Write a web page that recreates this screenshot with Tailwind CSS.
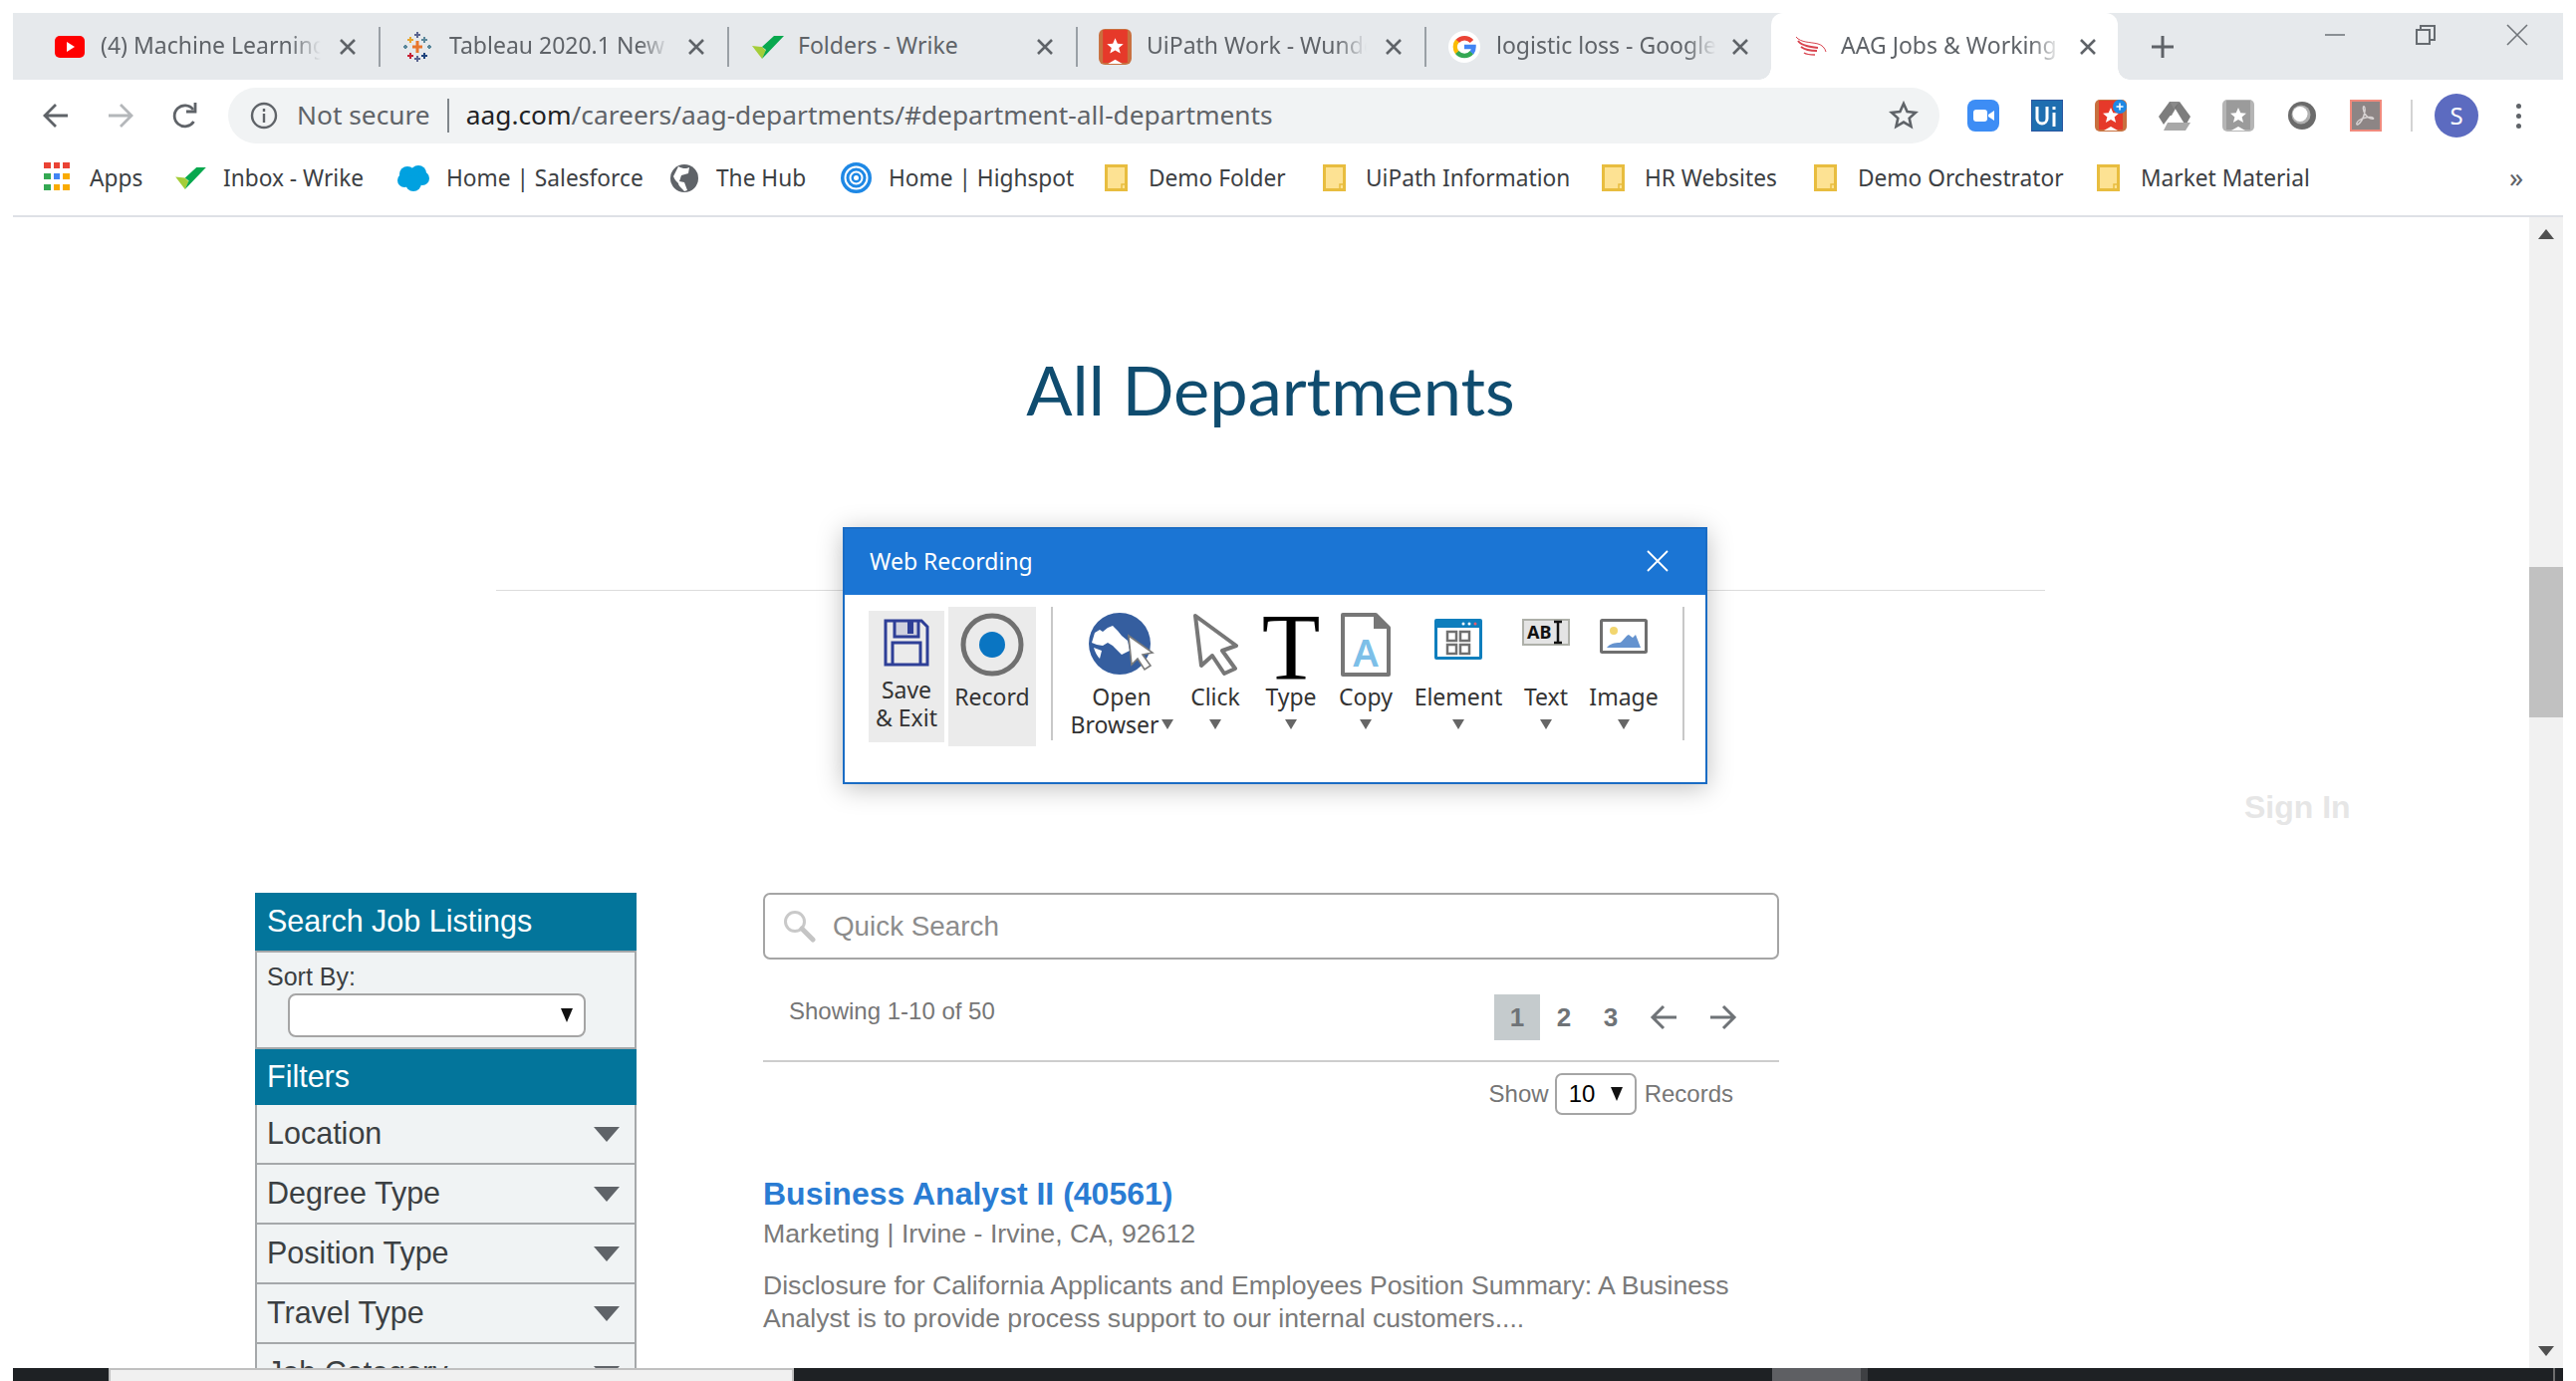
<!DOCTYPE html>
<html lang="en">
<head>
    <meta charset="UTF-8">
    <title>AAG Jobs &amp; Working at AAG</title>
    <script src="https://cdn.jsdelivr.net/npm/@tailwindcss/browser@4"></script>
</head>
<body class="bg-white overflow-hidden">
<svg class="hidden">
    <symbol id="folder" viewBox="0 0 23 27"><path d="M1.5 1.5h20v24H1.5z" fill="#fde293" stroke="#e8bd3f" stroke-width="3"/><path d="M17 25v-5h5" fill="none" stroke="#e8bd3f" stroke-width="1.5"/></symbol>
    <symbol id="check" viewBox="0 0 32 24"><path d="M0 11l10 1 4 4-4 8z" fill="#a4cd39"/><path d="M10 12L22 1h10L10 24l4-9z" fill="#08a84e"/></symbol>
    <symbol id="close" viewBox="0 0 18 18"><path d="M2 2l14 14M16 2L2 16" fill="none" stroke="#5f6368" stroke-width="2.6"/></symbol>
    <symbol id="caret" viewBox="0 0 12 10"><path d="M0 0h12L6 10z" fill="#666"/></symbol>
</svg>

<div class="w-[2586px] h-[1386px] flex flex-col pt-[13px] px-[13px] font-['Noto_Sans',sans-serif] overflow-hidden">

    <!-- tab strip -->
    <div class="h-[67px] shrink-0 bg-[#e6e9ec] flex items-center pl-[19px] text-[23px] text-[#5f6368]">
        <div class="w-[348px] h-full flex items-center pl-[23px]">
            <div class="w-[46px] shrink-0"><svg width="30" height="22" viewBox="0 0 30 22"><rect width="30" height="22" rx="5" fill="#f00"/><path d="M12 6l8 5-8 5z" fill="#fff"/></svg></div>
            <div class="w-[221px] mb-[2px] overflow-hidden whitespace-nowrap [mask-image:linear-gradient(to_right,#000_86%,transparent)]">(4) Machine Learning Course</div>
            <svg class="ml-[18px] shrink-0" width="18" height="18"><use href="#close"/></svg>
        </div>
        <div class="w-[2px] h-[40px] bg-[#9aa0a6] shrink-0"></div>
        <div class="w-[348px] h-full flex items-center pl-[23px]">
            <div class="w-[46px] shrink-0">
                <svg width="28" height="30" viewBox="0 0 28 30" fill="none" stroke-width="2">
                    <path d="M14 9v12M9 15h10" stroke="#e8762d" stroke-width="3"/>
                    <path d="M7 5v6M4 8h6" stroke="#e8a52d"/><path d="M21 5v6M18 8h6" stroke="#5b879b"/>
                    <path d="M7 21v6M4 24h6" stroke="#c72035"/><path d="M21 21v6M18 24h6" stroke="#1f447e"/>
                    <path d="M14 0v6M11 3h6" stroke="#5b6591"/><path d="M14 24v6M11 27h6" stroke="#5b6591"/>
                    <path d="M2 13v4M0 15h4" stroke="#59879b"/><path d="M26 13v4M24 15h4" stroke="#59879b"/>
                </svg>
            </div>
            <div class="w-[221px] mb-[2px] overflow-hidden whitespace-nowrap [mask-image:linear-gradient(to_right,#000_86%,transparent)]">Tableau 2020.1 New Features</div>
            <svg class="ml-[18px] shrink-0" width="18" height="18"><use href="#close"/></svg>
        </div>
        <div class="w-[2px] h-[40px] bg-[#9aa0a6] shrink-0"></div>
        <div class="w-[348px] h-full flex items-center pl-[23px]">
            <div class="w-[46px] shrink-0"><svg width="32" height="24"><use href="#check"/></svg></div>
            <div class="w-[221px] mb-[2px] overflow-hidden whitespace-nowrap">Folders - Wrike</div>
            <svg class="ml-[18px] shrink-0" width="18" height="18"><use href="#close"/></svg>
        </div>
        <div class="w-[2px] h-[40px] bg-[#9aa0a6] shrink-0"></div>
        <div class="w-[348px] h-full flex items-center pl-[21px]">
            <div class="w-[48px] shrink-0">
                <svg width="33" height="36" viewBox="0 0 32 35"><rect width="32" height="35" rx="6" fill="#c8703f"/><rect x="4" y="1" width="24" height="32" fill="#e6392a"/><path d="M16 9l2.300 5.300 5.700.5-4.400 3.600 1.500 5.500-5.100-2.900-5.100 2.900 1.500-5.500L8 14.800l5.700-.5z" fill="#fff"/><path d="M9 34l7-4 7 4z" fill="#fff"/></svg>
            </div>
            <div class="w-[221px] mb-[2px] overflow-hidden whitespace-nowrap [mask-image:linear-gradient(to_right,#000_86%,transparent)]">UiPath Work - Wunderlist</div>
            <svg class="ml-[18px] shrink-0" width="18" height="18"><use href="#close"/></svg>
        </div>
        <div class="w-[2px] h-[40px] bg-[#9aa0a6] shrink-0"></div>
        <div class="w-[346px] h-full flex items-center pl-[22px]">
            <div class="w-[48px] shrink-0">
                <svg width="32" height="32" viewBox="0 0 32 32"><circle cx="16" cy="16" r="16" fill="#fff"/><g fill="none" stroke-width="4.500"><path d="M23.500 10.500a9.500 9.500 0 0 0-14.500 0" stroke="#ea4335"/><path d="M9 10a9.500 9.500 0 0 0 0 12" stroke="#fbbc05"/><path d="M8.800 21.500a9.500 9.500 0 0 0 14.700 0" stroke="#34a853"/><path d="M23.500 22a9.500 9.500 0 0 0 2-6H16" stroke="#4285f4"/></g></svg>
            </div>
            <div class="w-[221px] mb-[2px] overflow-hidden whitespace-nowrap [mask-image:linear-gradient(to_right,#000_86%,transparent)]">logistic loss - Google Search</div>
            <svg class="ml-[15px] shrink-0" width="18" height="18"><use href="#close"/></svg>
        </div>
        <div class="relative w-[348px] h-full flex items-center pl-[24px] bg-white rounded-t-[12px]">
            <div class="absolute left-[-12px] bottom-0 w-[12px] h-[12px] bg-[radial-gradient(circle_at_0_0,#e6e9ec_11.500px,#fff_12px)]"></div>
            <div class="absolute right-[-12px] bottom-0 w-[12px] h-[12px] bg-[radial-gradient(circle_at_100%_0,#e6e9ec_11.500px,#fff_12px)]"></div>
            <div class="w-[46px] shrink-0">
                <svg width="32" height="22" viewBox="0 0 32 22" fill="none" stroke="#d9434e"><path d="M1 1c5 6 14 5 22 7 4 1 7 4 8 8" stroke-width="1"/><path d="M3 5c4 5 12 6 20 7" stroke-width="2"/><path d="M6 11c4 3 9 4 16 4" stroke-width="2"/><path d="M9 17c3 2 7 2 11 2" stroke-width="1.500"/></svg>
            </div>
            <div class="w-[221px] mb-[2px] overflow-hidden whitespace-nowrap [mask-image:linear-gradient(to_right,#000_86%,transparent)]">AAG Jobs &amp; Working at AAG</div>
            <svg class="ml-[18px] shrink-0" width="18" height="18"><use href="#close"/></svg>
        </div>
        <svg class="ml-[33px] shrink-0" width="24" height="24" viewBox="0 0 24 24"><path d="M12 1v22M1 12h22" stroke="#5f6368" stroke-width="3"/></svg>
        <div class="ml-[151px] w-[20px] h-[2px] bg-[#8a8f94] mb-[24px] shrink-0"></div>
        <svg class="ml-[71px] mb-[24px] shrink-0" width="20" height="20" viewBox="0 0 20 20" fill="none" stroke="#666b70" stroke-width="2"><rect x="1" y="5" width="13" height="14"/><path d="M5 5V1h14v14h-5"/></svg>
        <svg class="ml-[71px] mb-[24px] shrink-0" width="22" height="22" viewBox="0 0 22 22"><path d="M1 1l20 20M21 1L1 21" stroke="#70757a" stroke-width="1.600"/></svg>
    </div>

    <!-- toolbar -->
    <div class="h-[70px] shrink-0 pt-[8px] pb-[6px]">
        <div class="h-[56px] flex items-center pl-[30px]">
            <svg width="26" height="26" viewBox="0 0 26 26" fill="none" stroke="#5f6368" stroke-width="2.800"><path d="M25 13H3M13 2L2 13l11 11"/></svg>
            <svg class="ml-[39px]" width="26" height="26" viewBox="0 0 26 26" fill="none" stroke="#b4b7ba" stroke-width="2.800"><path d="M1 13h22M13 2l11 11-11 11"/></svg>
            <svg class="ml-[39px]" width="26" height="28" viewBox="0 0 26 28" fill="none" stroke="#5f6368" stroke-width="2.800"><path d="M21.500 20a10.500 10.500 0 1 1-.5-12"/><path d="M23 1v9h-9" stroke-width="2.800"/></svg>
            <div class="ml-[30px] w-[1718px] h-[56px] rounded-[28px] bg-[#f1f3f4] flex items-center pl-[22px] text-[26.300px] text-[#5f6368] whitespace-nowrap">
                <svg width="28" height="28" viewBox="0 0 28 28" fill="none" stroke="#5f6368" stroke-width="2.400"><circle cx="14" cy="14" r="12"/><path d="M14 12v9"/><path d="M14 7v3"/></svg>
                <span class="ml-[19px]">Not secure</span>
                <div class="ml-[17px] w-[2px] h-[34px] bg-[#80868b]"></div>
                <span class="ml-[17px]"><span class="text-[#202124]">aag.com</span>/careers/aag-departments/#department-all-departments</span>
                <svg class="ml-auto mr-[21px]" width="30" height="30" viewBox="0 0 30 30" fill="none" stroke="#5f6368" stroke-width="2.600"><path d="M15 3l3.600 8 8.400.9-6.300 5.700 1.800 8.400-7.500-4.400-7.500 4.400 1.800-8.400L3 11.900l8.400-.9z"/></svg>
            </div>
            <!-- extensions -->
            <svg class="ml-[28px]" width="32" height="32" viewBox="0 0 32 32"><rect width="32" height="32" rx="8" fill="#3d8df5"/><rect x="6" y="10" width="14" height="12" rx="3" fill="#fff"/><path d="M21 15l6-4v10l-6-4z" fill="#fff"/></svg>
            <svg class="ml-[32px]" width="32" height="32" viewBox="0 0 32 32"><rect width="32" height="32" rx="1" fill="#1f6eb0"/><rect width="32" height="32" rx="1" fill="none" stroke="#2a56a0" stroke-width="2"/><path d="M6 7v12a5 5 0 0 0 10 0V7" fill="none" stroke="#fff" stroke-width="3"/><path d="M23 13v14M23 7v3" stroke="#fff" stroke-width="3"/></svg>
            <svg class="ml-[32px]" width="32" height="32" viewBox="0 0 32 32"><rect width="32" height="32" rx="5" fill="#c8703f"/><rect x="4" y="1" width="24" height="29" fill="#e6392a"/><path d="M16 8l2.300 5.300 5.700.5-4.400 3.600 1.500 5.500-5.100-2.900-5.100 2.900 1.500-5.500L8 13.800l5.700-.5z" fill="#fff"/><path d="M9 31l7-4 7 4z" fill="#fff"/><circle cx="25" cy="7" r="7" fill="#1e88e5"/><path d="M25 3.500v7M21.500 7h7" stroke="#fff" stroke-width="1.500"/></svg>
            <svg class="ml-[32px]" width="32" height="30" viewBox="0 0 32 30"><path d="M11 1h10l-8 14-5 0z" fill="#8a8a8a"/><path d="M21 1l11 15-5 9-11-18z" fill="#6f6f6f" opacity=".9"/><path d="M0 16L11 1l5 8-11 15z" fill="#7d7d7d"/><path d="M9 22h23l-5 8H5z" fill="#a8a8a8"/></svg>
            <svg class="ml-[32px]" width="32" height="32" viewBox="0 0 32 32"><rect width="32" height="32" rx="5" fill="#b5b5b5"/><rect x="4" y="1" width="24" height="29" fill="#9b9b9b"/><path d="M16 8l2.300 5.300 5.700.5-4.400 3.600 1.500 5.500-5.100-2.900-5.100 2.900 1.500-5.500L8 13.800l5.700-.5z" fill="#fff"/><path d="M9 31l7-4 7 4z" fill="#fff"/></svg>
            <svg class="ml-[32px]" width="32" height="32" viewBox="0 0 32 32"><circle cx="16" cy="16" r="14" fill="#6b6b6b"/><circle cx="15" cy="15" r="9.500" fill="#b0b0b0"/><circle cx="14" cy="14.500" r="7.500" fill="#fff"/></svg>
            <svg class="ml-[32px]" width="32" height="32" viewBox="0 0 32 32"><rect width="32" height="32" fill="#f08a7d"/><rect x="2" y="2" width="28" height="28" fill="#8d8585"/><path d="M8 25c3-2 6-8 7-13 .5-4-.5-6-1.500-5-1 2 1 8 5 11 3 2 6 1.500 5 .5-2-2-10-.5-14 2-3 2-3.500 5-1.500 4.500z" fill="none" stroke="#d8d3d3" stroke-width="1.400"/></svg>
            <div class="ml-[29px] w-[2px] h-[32px] bg-[#d3d3d3]"></div>
            <div class="ml-[22px] w-[44px] h-[44px] rounded-full bg-[#5c6bc0] text-white flex items-center justify-center text-[24px]">S</div>
            <div class="ml-[38px] flex flex-col gap-[5px]">
                <div class="w-[5px] h-[5px] rounded-full bg-[#5f6368]"></div>
                <div class="w-[5px] h-[5px] rounded-full bg-[#5f6368]"></div>
                <div class="w-[5px] h-[5px] rounded-full bg-[#5f6368]"></div>
            </div>
        </div>
    </div>

    <!-- bookmarks -->
    <div class="h-[68px] shrink-0 pb-[8px] border-b-2 border-[#dee1e6] flex items-center pl-[31px] text-[22.700px] text-[#3c4043] whitespace-nowrap">
        <div class="w-[132px] flex items-center">
            <div class="grid grid-cols-3 gap-x-[3px] gap-y-[5px] w-[26px] mb-[4px]">
                <div class="h-[6px] bg-[#ea4335]"></div><div class="h-[6px] bg-[#ea4335]"></div><div class="h-[6px] bg-[#ea4335]"></div>
                <div class="h-[6px] bg-[#34a853]"></div><div class="h-[6px] bg-[#4285f4]"></div><div class="h-[6px] bg-[#f9ab00]"></div>
                <div class="h-[6px] bg-[#34a853]"></div><div class="h-[6px] bg-[#f9ab00]"></div><div class="h-[6px] bg-[#f9ab00]"></div>
            </div>
            <span class="ml-[20px]">Apps</span>
        </div>
        <div class="w-[223px] flex items-center"><svg width="31" height="23"><use href="#check"/></svg><span class="ml-[17px]">Inbox - Wrike</span></div>
        <div class="w-[274px] flex items-center">
            <svg width="32" height="26" viewBox="0 0 32 26"><circle cx="10" cy="9" r="8" fill="#00a1e0"/><circle cx="21" cy="8" r="8" fill="#00a1e0"/><circle cx="25" cy="13" r="7" fill="#00a1e0"/><circle cx="7" cy="15" r="7" fill="#00a1e0"/><circle cx="16" cy="18" r="8" fill="#00a1e0"/></svg>
            <span class="ml-[17px]">Home | Salesforce</span>
        </div>
        <div class="w-[171px] flex items-center">
            <svg width="28" height="28" viewBox="0 0 28 28"><circle cx="14" cy="14" r="14" fill="#5f6368"/><path d="M8 2c5 3 9 2 11 1l-1 6-7 2-2 6 5 1 3 8-3 1c-2-3-6-5-6-8-2-2-4-4-5-7z" fill="#fff"/></svg>
            <span class="ml-[18px]">The Hub</span>
        </div>
        <div class="w-[265px] flex items-center">
            <svg width="31" height="31" viewBox="0 0 31 31" fill="none"><circle cx="15.500" cy="15.500" r="15.500" fill="#1e88e5"/><circle cx="15.500" cy="15.500" r="11" stroke="#fff" stroke-width="2"/><circle cx="15.500" cy="15.500" r="6" stroke="#fff" stroke-width="2"/><circle cx="15.500" cy="15.500" r="2.500" fill="#fff"/></svg>
            <span class="ml-[17px]">Home | Highspot</span>
        </div>
        <div class="w-[219px] flex items-center"><svg width="23" height="27"><use href="#folder"/></svg><span class="ml-[21px]">Demo Folder</span></div>
        <div class="w-[280px] flex items-center"><svg width="23" height="27"><use href="#folder"/></svg><span class="ml-[20px]">UiPath Information</span></div>
        <div class="w-[213px] flex items-center"><svg width="23" height="27"><use href="#folder"/></svg><span class="ml-[20px]">HR Websites</span></div>
        <div class="w-[284px] flex items-center"><svg width="23" height="27"><use href="#folder"/></svg><span class="ml-[21px]">Demo Orchestrator</span></div>
        <div class="w-[414px] flex items-center"><svg width="23" height="27"><use href="#folder"/></svg><span class="ml-[21px]">Market Material</span></div>
        <span class="text-[28px] text-[#5f6368] mb-[4px]">»</span>
    </div>

    <!-- page -->
    <div class="flex-1 min-h-0 flex">
        <div class="relative flex-1 min-w-0 overflow-hidden font-['Liberation_Sans',Arial,sans-serif]">
            <div class="ml-[485px] w-[1555px]">
                <h1 class="mt-[133px] h-[80px] leading-[80px] text-center text-[68.500px] text-[#0f4c6f] font-['Lato',sans-serif]">All Departments</h1>
                <div class="mt-[161px] h-[1px] bg-[#dcdcdc]"></div>
            </div>
            <div class="ml-[2240px] mt-[200px] h-[34px] leading-[34px] text-[32px] font-bold text-[#e6e6e6] whitespace-nowrap">Sign In</div>

            <div class="mt-[69px] pl-[243px] flex gap-[127px]">
                <!-- filters -->
                <div class="w-[383px] shrink-0 text-[30.500px] text-[#3b3f42]">
                    <div class="h-[58px] bg-[#03759b] text-white pl-[12px] flex items-center">Search Job Listings</div>
                    <div class="h-[99px] bg-[#f0f3f4] border-x-2 border-y-2 border-[#a5a8aa] pl-[10px] text-[25px]">
                        <div class="h-[41px] pt-[7px] leading-[34px]">Sort By:</div>
                        <div class="ml-[21px] w-[299px] h-[44px] bg-white border-2 border-[#a5a5a5] rounded-[8px] flex items-center justify-end pr-[11px]">
                            <svg width="12" height="14" viewBox="0 0 12 14"><path d="M0 0h12L6 14z" fill="#111"/></svg>
                        </div>
                    </div>
                    <div class="h-[56px] bg-[#03759b] text-white pl-[12px] flex items-center">Filters</div>
                    <div class="h-[60px] bg-[#f0f3f4] border-x-2 border-b-2 border-[#a5a8aa] pl-[10px] pr-[15px] flex items-center justify-between">Location<svg width="26" height="15" viewBox="0 0 26 15"><path d="M0 0h26L13 15z" fill="#5f6368"/></svg></div>
                    <div class="h-[60px] bg-[#f0f3f4] border-x-2 border-b-2 border-[#a5a8aa] pl-[10px] pr-[15px] flex items-center justify-between">Degree Type<svg width="26" height="15" viewBox="0 0 26 15"><path d="M0 0h26L13 15z" fill="#5f6368"/></svg></div>
                    <div class="h-[60px] bg-[#f0f3f4] border-x-2 border-b-2 border-[#a5a8aa] pl-[10px] pr-[15px] flex items-center justify-between">Position Type<svg width="26" height="15" viewBox="0 0 26 15"><path d="M0 0h26L13 15z" fill="#5f6368"/></svg></div>
                    <div class="h-[60px] bg-[#f0f3f4] border-x-2 border-b-2 border-[#a5a8aa] pl-[10px] pr-[15px] flex items-center justify-between">Travel Type<svg width="26" height="15" viewBox="0 0 26 15"><path d="M0 0h26L13 15z" fill="#5f6368"/></svg></div>
                    <div class="h-[60px] bg-[#f0f3f4] border-x-2 border-b-2 border-[#a5a8aa] pl-[10px] pr-[15px] flex items-center justify-between">Job Category<svg width="26" height="15" viewBox="0 0 26 15"><path d="M0 0h26L13 15z" fill="#5f6368"/></svg></div>
                </div>

                <!-- results -->
                <div class="w-[1020px] shrink-0">
                    <div class="h-[67px] border-2 border-[#a5a5a5] rounded-[7px] flex items-center pl-[18px] text-[27.800px] text-[#8c8c8c]">
                        <svg width="33" height="33" viewBox="0 0 33 33" fill="none"><circle cx="12" cy="12" r="9.500" stroke="#c9c9c9" stroke-width="3"/><path d="M19 19l11 11" stroke="#c4c4c4" stroke-width="5" stroke-linecap="round"/></svg>
                        <span class="ml-[17px]">Quick Search</span>
                    </div>
                    <div class="mt-[35px] h-[46px] flex pl-[26px] text-[24px] text-[#767676]">
                        <div class="leading-[33px]">Showing 1-10 of 50</div>
                        <div class="ml-auto mr-[26px] flex items-center text-[26px] font-bold text-[#6f7377]">
                            <div class="w-[46px] h-[46px] bg-[#c5cbcd] flex items-center justify-center">1</div>
                            <div class="w-[48px] text-center">2</div>
                            <div class="w-[46px] text-center">3</div>
                            <div class="w-[60px] flex justify-center"><svg width="28" height="26" viewBox="0 0 28 26" fill="none" stroke="#6f7377" stroke-width="3"><path d="M27 13H3M14 2L3 13l11 11"/></svg></div>
                            <div class="w-[60px] flex justify-center"><svg width="28" height="26" viewBox="0 0 28 26" fill="none" stroke="#6f7377" stroke-width="3"><path d="M1 13h24M14 2l11 11-11 11"/></svg></div>
                        </div>
                    </div>
                    <div class="mt-[20px] h-[2px] bg-[#cdcdcd]"></div>
                    <div class="mt-[11px] h-[42px] flex items-center justify-end pr-[46px] text-[24px] text-[#767676]">
                        <span>Show</span>
                        <div class="ml-[6px] w-[82px] h-[42px] border-2 border-[#a5a5a5] rounded-[7px] flex items-center justify-between pl-[12px] pr-[12px] text-black">10<svg width="12" height="14" viewBox="0 0 12 14"><path d="M0 0h12L6 14z" fill="#111"/></svg></div>
                        <span class="ml-[8px]">Records</span>
                    </div>
                    <a class="block mt-[59px] h-[40px] leading-[40px] text-[32px] font-bold text-[#2a7cd3]">Business Analyst II (40561)</a>
                    <div class="mt-[2px] h-[36px] leading-[36px] text-[26.700px] text-[#7a7a7a]">Marketing | Irvine - Irvine, CA, 92612</div>
                    <p class="mt-[18px] leading-[33px] text-[26.600px] text-[#7a7a7a]">Disclosure for California Applicants and Employees Position Summary: A Business<br>Analyst is to provide process support to our internal customers....</p>
                </div>
            </div>

            <!-- Web Recording dialog -->
            <div class="absolute left-[833px] top-[311px] w-[868px] h-[258px] bg-white border-2 border-[#1a6cc4] shadow-[0_4px_24px_rgba(0,0,0,0.25)] font-['Noto_Sans',sans-serif] text-[23px] leading-[28px] text-[#333]">
                <div class="h-[66px] pb-[3px] bg-[#1b75d4] text-white flex items-center justify-between pl-[25px] pr-[36px] text-[23px]">
                    <span>Web Recording</span>
                    <svg width="24" height="24" viewBox="0 0 24 24"><path d="M2 2l20 20M22 2L2 22" stroke="#fff" stroke-width="1.800"/></svg>
                </div>
                <div class="flex items-start pl-[24px]">
                    <div class="mt-[16px] w-[76px] h-[132px] bg-[#ebebeb] flex flex-col items-center pt-[8px] text-center">
                        <svg width="46" height="48" viewBox="0 0 46 48" fill="none" stroke="#2e3f97" stroke-width="3"><path d="M2 2h36l6 6v38H2z"/><path d="M11 2v16h24V2" fill="#2e3f97" fill-opacity=".15"/><path d="M24 3v12h6V3z" fill="#2e3f97" stroke="none"/><path d="M9 46V24h28v22"/></svg>
                        <div class="mt-[9px]">Save<br>&amp; Exit</div>
                    </div>
                    <div class="ml-[4px] mt-[12px] w-[88px] h-[140px] bg-[#ebebeb] flex flex-col items-center pt-[6px]">
                        <svg width="64" height="64" viewBox="0 0 64 64" fill="none"><circle cx="32" cy="32" r="29" stroke="#707070" stroke-width="5"/><circle cx="32" cy="32" r="13" fill="#0a75c2"/></svg>
                        <div class="mt-[6px]">Record</div>
                    </div>
                    <div class="ml-[15px] mt-[12px] w-[2px] h-[134px] bg-[#c8c8c8]"></div>
                    <div class="w-[138px] mt-[18px] flex flex-col items-center">
                        <div class="h-[70px]">
                            <svg width="66" height="63" viewBox="0 0 66 63"><circle cx="31" cy="31" r="31" fill="#355e9f"/><path d="M6 20L11 17 14 19 19 15 24 13 29 18 33 23 39 28 41 38 33 42 24 33 19 30 14 33 8 32 3 30zM5 35L13 38 11 46Q7 42 5 35z" fill="#fff"/><path d="M40 23L64 40 54 42 62 53 56 57 49 46 43 52z" fill="#fff" stroke="#7b7b7b" stroke-width="1.600"/></svg>
                        </div>
                        <div class="text-center">Open</div>
                        <div class="flex items-center">Browser<svg class="ml-[2px]" width="12" height="10"><use href="#caret"/></svg></div>
                    </div>
                    <div class="w-[50px] mt-[18px] flex flex-col items-center">
                        <div class="h-[70px]"><svg width="46" height="63" viewBox="0 0 46 63" fill="none"><path d="M3 3L44 33 30 38 43 56 32 61 20 43 9 53z" stroke="#777" stroke-width="4" stroke-linejoin="round"/></svg></div>
                        <div>Click</div>
                        <svg class="mt-[9px]" width="12" height="10"><use href="#caret"/></svg>
                    </div>
                    <div class="w-[102px] mt-[18px] flex flex-col items-center">
                        <div class="h-[70px] font-['Liberation_Serif',serif] text-[96px] leading-[70px] text-black">T</div>
                        <div>Type</div>
                        <svg class="mt-[9px]" width="12" height="10"><use href="#caret"/></svg>
                    </div>
                    <div class="w-[48px] mt-[18px] flex flex-col items-center">
                        <div class="h-[70px]"><svg width="50" height="64" viewBox="0 0 50 64"><path d="M2 2h33l13 13v47H2z" fill="#fff" stroke="#777" stroke-width="4" stroke-linejoin="round"/><path d="M33 2v14h15z" fill="#777"/><text x="25" y="54" text-anchor="middle" font-family="Noto Sans" font-weight="600" font-size="38" fill="#7dbfe8">A</text></svg></div>
                        <div>Copy</div>
                        <svg class="mt-[9px]" width="12" height="10"><use href="#caret"/></svg>
                    </div>
                    <div class="w-[138px] mt-[24px] flex flex-col items-center">
                        <div class="h-[64px]"><svg width="48" height="41" viewBox="0 0 48 41"><rect width="48" height="41" rx="2" fill="#0e7ebd"/><rect x="3" y="9" width="42" height="29" fill="#fff"/><circle cx="29" cy="5" r="1.500" fill="#fff"/><circle cx="35" cy="5" r="1.500" fill="#fff"/><circle cx="41" cy="5" r="1.500" fill="#f05a6a"/><g fill="none" stroke="#707070" stroke-width="2.500"><rect x="13" y="13" width="9" height="9"/><rect x="26" y="13" width="9" height="9"/><rect x="13" y="26" width="9" height="9"/><rect x="26" y="26" width="9" height="9"/></g></svg></div>
                        <div>Element</div>
                        <svg class="mt-[9px]" width="12" height="10"><use href="#caret"/></svg>
                    </div>
                    <div class="w-[38px] mt-[24px] flex flex-col items-center">
                        <div class="h-[64px]"><svg width="48" height="27" viewBox="0 0 48 27"><rect x="1" y="1" width="46" height="25" fill="#e4e4e4" stroke="#aeb0a9" stroke-width="2"/><text x="5" y="20" font-family="Noto Sans" font-weight="700" font-size="18" fill="#111">AB</text><path d="M32 3h8M32 24h8M36 3v21" stroke="#111" stroke-width="2.500"/></svg></div>
                        <div>Text</div>
                        <svg class="mt-[9px]" width="12" height="10"><use href="#caret"/></svg>
                    </div>
                    <div class="w-[118px] mt-[24px] flex flex-col items-center">
                        <div class="h-[64px]"><svg width="48" height="35" viewBox="0 0 48 35"><rect x="1.500" y="1.500" width="45" height="32" rx="1" fill="#fff" stroke="#6f6f6f" stroke-width="3"/><circle cx="14" cy="12" r="4" fill="#f2d66f"/><path d="M7 29c3-4 8-5 13-5 3-1 6-7 9-8l4 3 3-3 5 13z" fill="#6593cf"/></svg></div>
                        <div>Image</div>
                        <svg class="mt-[9px]" width="12" height="10"><use href="#caret"/></svg>
                    </div>
                    <div class="mt-[12px] w-[2px] h-[134px] bg-[#c8c8c8]"></div>
                </div>
            </div>
        </div>

        <!-- page scrollbar -->
        <div class="w-[34px] shrink-0 bg-[#f1f1f1] flex flex-col items-center">
            <svg class="mt-[12px]" width="16" height="10" viewBox="0 0 16 10"><path d="M0 10h16L8 0z" fill="#505050"/></svg>
            <div class="mt-[329px] w-full h-[151px] bg-[#c1c1c1]"></div>
            <svg class="mt-auto mb-[12px]" width="16" height="10" viewBox="0 0 16 10"><path d="M0 0h16L8 10z" fill="#505050"/></svg>
        </div>
    </div>

    <!-- dark bar along the bottom edge -->
    <div class="relative z-10 h-[13px] shrink-0 bg-[#1e2124] flex">
        <div class="ml-[96px] w-[688px] bg-[#f0f0f0] border-2 border-b-0 border-[#c0c0c0]"></div>
        <div class="ml-[982px] w-[89px] bg-[#5e5f63]"></div>
        <div class="w-[7px] bg-[#3e4043]"></div>
        <div class="ml-[688px] w-[2px] bg-[#6d6d6d]"></div>
    </div>
</div>
</body>
</html>
